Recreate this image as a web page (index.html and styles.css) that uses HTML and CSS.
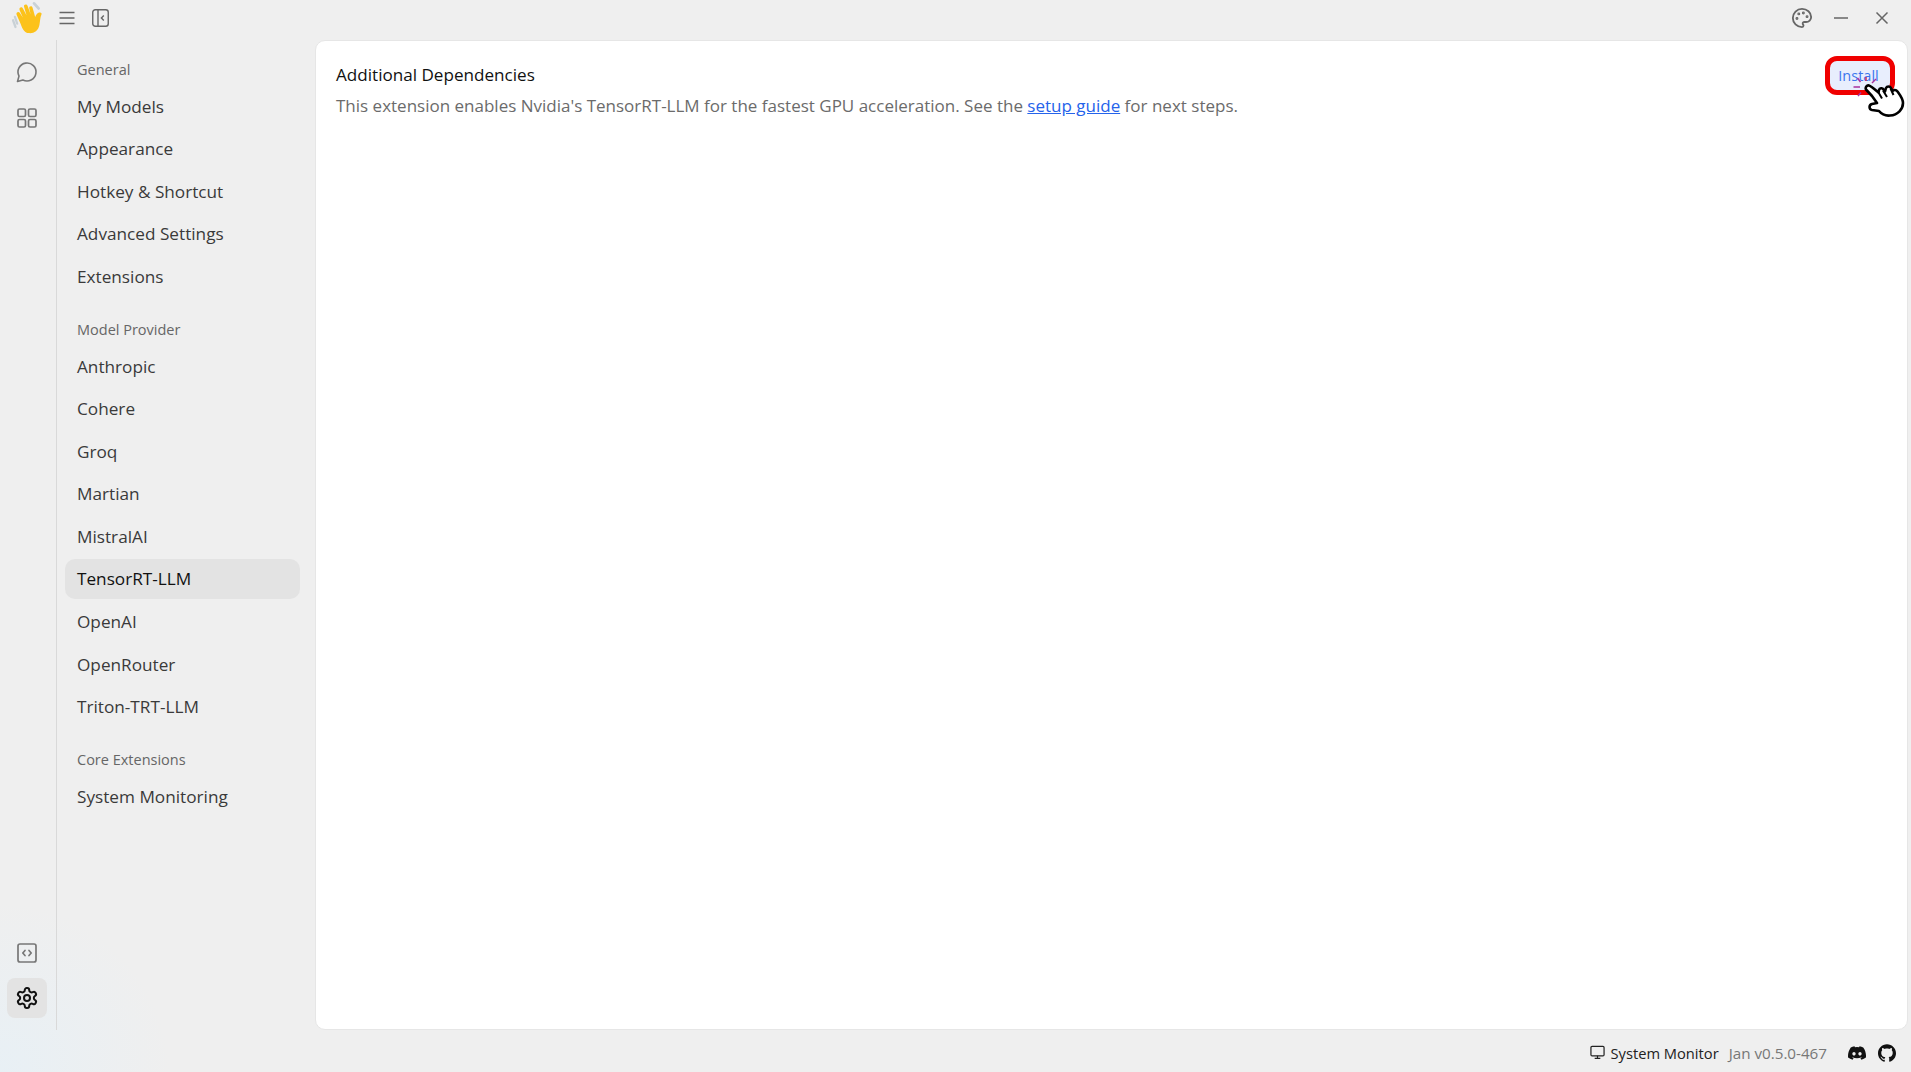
FILE: index.html
```html
<!DOCTYPE html>
<html lang="en">

<head>
    <meta charset="utf-8">
    <title>Jan</title>
    <link rel="stylesheet" href="styles.css">
</head>

<body>
    <header class="topbar">
        <div class="topbar-left">
            <svg class="logo" viewBox="0 0 32 32" width="36" height="36">
                <path d="M3.500 15 L5.500 21 M1.800 18 L4 24" stroke="#c9d1d6" stroke-width="2" fill="none" stroke-linecap="round" />
                <path d="M20.500 3 L24.500 7.500" stroke="#c9d1d6" stroke-width="2.500" fill="none" stroke-linecap="round" />
                <path d="M8.500 21 L5 13 C4.200 11 6.800 9.800 7.900 11.600 L10.500 15.500 L7.600 8.800 C6.900 6.700 9.600 5.600 10.600 7.600 L13.800 13.500 L11.600 6 C11.100 4 13.900 3.200 14.700 5.200 L17.400 12.600 L16.200 7.300 C15.900 5.200 18.600 4.800 19.200 6.800 L21.500 15 C22.400 13 23.400 11.600 25 11.200 C27 10.800 27.600 12 27 13.200 C25.800 15.600 26 19 25.200 22.400 C24.200 27.400 20 30 15.800 29.400 C12.400 29 10.600 26.800 8.500 21 Z" fill="#fcc21b" />
            </svg>
            <svg class="icon" viewBox="0 0 16 16" width="16" height="16">
                <path d="M0.500 2.500h15M0.500 8h15M0.500 13.500h15" stroke="#666" stroke-width="1.500" fill="none" />
            </svg>
            <svg class="icon" viewBox="0 0 17 18" width="17" height="18">
                <rect x="0.750" y="0.750" width="15.500" height="16.500" rx="2.500" stroke="#666" stroke-width="1.400" fill="none" />
                <path d="M6 1v16M11.800 6.500 L9.400 9 L11.800 11.500" stroke="#666" stroke-width="1.400" fill="none" />
            </svg>
        </div>
        <div class="topbar-right">
            <svg class="icon palette" viewBox="0 0 24 24" width="22" height="22" fill="none" stroke="#666" stroke-width="2" stroke-linecap="round" stroke-linejoin="round">
                <circle cx="13.500" cy="6.500" r="0.600" fill="#666" />
                <circle cx="17.500" cy="10.500" r="0.600" fill="#666" />
                <circle cx="8.500" cy="7.500" r="0.600" fill="#666" />
                <circle cx="6.500" cy="12.500" r="0.600" fill="#666" />
                <path d="M12 2C6.500 2 2 6.500 2 12s4.500 10 10 10c.926 0 1.648-.746 1.648-1.688 0-.437-.18-.835-.437-1.125-.29-.289-.438-.652-.438-1.125a1.640 1.640 0 0 1 1.668-1.668h1.996c3.051 0 5.555-2.503 5.555-5.554C21.965 6.012 17.461 2 12 2z" />
            </svg>
            <svg class="icon" viewBox="0 0 14 14" width="14" height="14">
                <path d="M0 7h14" stroke="#666" stroke-width="1.500" />
            </svg>
            <svg class="icon close" viewBox="0 0 14 14" width="14" height="14">
                <path d="M1.500 1.500l11 11M12.500 1.500l-11 11" stroke="#666" stroke-width="1.500" />
            </svg>
        </div>
    </header>

    <div class="body-row">
        <aside class="rail">
            <div class="rail-group">
                <div class="rail-btn">
                    <svg viewBox="0 0 24 24" width="24" height="24" fill="none" stroke="#777" stroke-width="1.600" stroke-linecap="round" stroke-linejoin="round">
                        <path d="M7.900 20A9 9 0 1 0 4 16.100L2.500 21.500Z" />
                    </svg>
                </div>
                <div class="rail-btn">
                    <svg viewBox="0 0 20 20" width="20" height="20" fill="none" stroke="#777" stroke-width="1.700">
                        <rect x="1" y="1" width="7.500" height="7.500" rx="1.500" />
                        <rect x="11.500" y="1" width="7.500" height="7.500" rx="1.500" />
                        <rect x="1" y="11.500" width="7.500" height="7.500" rx="1.500" />
                        <rect x="11.500" y="11.500" width="7.500" height="7.500" rx="1.500" />
                    </svg>
                </div>
            </div>
            <div class="rail-group">
                <div class="rail-btn">
                    <svg viewBox="0 0 20 20" width="20" height="20" fill="none" stroke="#777" stroke-width="1.700" stroke-linecap="round" stroke-linejoin="round">
                        <rect x="1" y="1" width="18" height="18" rx="2" />
                        <path d="M8 7.500L5.800 10L8 12.500M12 7.500L14.200 10L12 12.500" />
                    </svg>
                </div>
                <div class="rail-btn active">
                    <svg viewBox="0 0 24 24" width="24" height="24" fill="none" stroke="#111" stroke-width="2" stroke-linecap="round" stroke-linejoin="round">
                        <path d="M12.220 2h-.44a2 2 0 0 0-2 2v.18a2 2 0 0 1-1 1.730l-.43.25a2 2 0 0 1-2 0l-.15-.08a2 2 0 0 0-2.730.73l-.22.38a2 2 0 0 0 .73 2.730l.15.1a2 2 0 0 1 1 1.720v.51a2 2 0 0 1-1 1.740l-.15.09a2 2 0 0 0-.73 2.730l.22.38a2 2 0 0 0 2.730.73l.15-.08a2 2 0 0 1 2 0l.43.25a2 2 0 0 1 1 1.730V20a2 2 0 0 0 2 2h.44a2 2 0 0 0 2-2v-.18a2 2 0 0 1 1-1.730l.43-.25a2 2 0 0 1 2 0l.15.08a2 2 0 0 0 2.730-.73l.22-.39a2 2 0 0 0-.73-2.730l-.15-.08a2 2 0 0 1-1-1.740v-.5a2 2 0 0 1 1-1.740l.15-.09a2 2 0 0 0 .73-2.730l-.22-.38a2 2 0 0 0-2.730-.73l-.15.08a2 2 0 0 1-2 0l-.43-.25a2 2 0 0 1-1-1.730V4a2 2 0 0 0-2-2z" />
                        <circle cx="12" cy="12" r="3" />
                    </svg>
                </div>
            </div>
        </aside>

        <nav class="sidebar">
            <h3 class="group-title">General</h3>
            <a class="item">My Models</a>
            <a class="item">Appearance</a>
            <a class="item">Hotkey &amp; Shortcut</a>
            <a class="item">Advanced Settings</a>
            <a class="item">Extensions</a>

            <h3 class="group-title">Model Provider</h3>
            <a class="item">Anthropic</a>
            <a class="item">Cohere</a>
            <a class="item">Groq</a>
            <a class="item">Martian</a>
            <a class="item">MistralAI</a>
            <a class="item selected">TensorRT-LLM</a>
            <a class="item">OpenAI</a>
            <a class="item">OpenRouter</a>
            <a class="item">Triton-TRT-LLM</a>

            <h3 class="group-title">Core Extensions</h3>
            <a class="item">System Monitoring</a>
        </nav>

        <main class="card">
            <div class="dep-row">
                <div>
                    <h2 class="dep-title">Additional Dependencies</h2>
                    <p class="dep-text">This extension enables Nvidia's TensorRT-LLM for the fastest GPU acceleration. See the <a class="link" href="#">setup guide</a> for next steps.</p>
                </div>
                <div class="install-wrap">
                    <button class="install">Install</button>
                    <svg class="hand" viewBox="0 0 55 42" width="55" height="42">
                        <g stroke="#a8329f" stroke-width="1.500" fill="none">
                            <path d="M3.500 12h6.500M8 21l3-3.500M7.500 3l3 4" />
                            <path d="M16 2v4" stroke="#d02a5a" />
                            <path d="M22 8l4-4" />
                        </g>
                        <g transform="translate(15 8)">
                            <path d="M12 20 L7 13 L1 6.500 C0 4.500 1.800 2 4 2.500 C6 3 10 6.500 13.500 9.500 L14 7 C14.500 5 17.500 4.500 18.500 6.500 L20 8.500 L21 5 C22 3 25 3 26 5 L27.500 8 C28.500 6.500 31 6.500 32.500 8.500 C35 12 38 15.500 38 20 C38 26 33 32 25 32.500 C20.500 33 16.500 31 14 28 L7 27 C4 26.500 3.500 22 7 21 Z" fill="#fff" stroke="#000" stroke-width="2.600" stroke-linejoin="round" />
                            <path d="M18 7.500 L22 14M25.500 5.500 L28.500 12M13.500 9.500 L17 15.500" stroke="#000" stroke-width="2" fill="none" />
                        </g>
                    </svg>
                </div>
            </div>
        </main>
    </div>

    <footer class="statusbar">
        <svg viewBox="0 0 16 16" width="15" height="15" fill="none" stroke="#222" stroke-width="1.300">
            <rect x="1" y="1.500" width="14" height="10" rx="1.200" />
            <path d="M8 11.500v2.500M5 14.300h6" />
        </svg>
        <span class="monitor">System Monitor</span>
        <span class="version">Jan v0.5.0-467</span>
        <svg class="discord" viewBox="0 0 24 18" width="18" height="14">
            <path fill="#111" d="M20.300 1.500A19.800 19.800 0 0 0 15.400 0l-.6 1.300a18.400 18.400 0 0 0-5.500 0L8.600 0a19.700 19.700 0 0 0-4.900 1.500C.6 6.100-.3 10.600.1 15a19.900 19.900 0 0 0 6 3l1.300-2a13 13 0 0 1-2-.9l.5-.4a14.200 14.200 0 0 0 12.200 0l.5.4a13 13 0 0 1-2 .9l1.300 2a19.800 19.800 0 0 0 6-3c.5-5.100-.8-9.600-3.600-13.500zM8 12.300c-1.200 0-2.200-1.100-2.200-2.400S6.800 7.500 8 7.500s2.200 1.100 2.200 2.400-1 2.400-2.200 2.400zm8 0c-1.200 0-2.200-1.100-2.200-2.400s1-2.400 2.200-2.400 2.200 1.100 2.200 2.400-1 2.400-2.200 2.400z" />
        </svg>
        <svg class="github" viewBox="0 0 24 24" width="18" height="18">
            <path fill="#111" d="M12 .297c-6.630 0-12 5.373-12 12 0 5.303 3.438 9.800 8.205 11.385.6.113.82-.258.82-.577 0-.285-.01-1.040-.015-2.040-3.338.724-4.042-1.610-4.042-1.610C4.422 18.070 3.633 17.700 3.633 17.700c-1.087-.744.084-.729.084-.729 1.205.084 1.838 1.236 1.838 1.236 1.070 1.835 2.809 1.305 3.495.998.108-.776.417-1.305.76-1.605-2.665-.3-5.466-1.332-5.466-5.930 0-1.310.465-2.380 1.235-3.220-.135-.303-.54-1.523.105-3.176 0 0 1.005-.322 3.300 1.230.96-.267 1.980-.399 3-.405 1.020.006 2.040.138 3 .405 2.280-1.552 3.285-1.230 3.285-1.230.645 1.653.24 2.873.12 3.176.765.840 1.230 1.910 1.230 3.220 0 4.610-2.805 5.625-5.475 5.920.42.36.81 1.096.81 2.220 0 1.606-.015 2.896-.015 3.286 0 .315.21.69.825.57C20.565 22.092 24 17.592 24 12.297c0-6.627-5.373-12-12-12" />
        </svg>
    </footer>
</body></html>
```

FILE: styles.css
```css
* {
    box-sizing: border-box;
}

html,
body {
    height: 100%;
}

body {
    margin: 0;
    display: flex;
    flex-direction: column;
    overflow: hidden;
    font-family: "Open Sans", "Noto Sans", sans-serif;
    background-color: #efefef;
    background-image: radial-gradient(circle at 0 100%, #e8f0f5, rgba(232, 240, 245, 0) 170px);
    color: #333;
}

.topbar {
    height: 40px;
    flex: none;
    display: flex;
    justify-content: space-between;
    align-items: center;
    padding: 0 22px 4px 11px;
}

.topbar-left,
.topbar-right {
    display: flex;
    align-items: center;
}

.topbar-left {
    gap: 17px;
}

.topbar-right {
    gap: 19px;
}

.logo {
    margin-right: -5px;
}

.palette {
    margin-right: 2px;
}

.close {
    margin-left: 8px;
}

.body-row {
    flex: 1;
    min-height: 0;
    display: flex;
}

.rail {
    width: 57px;
    flex: none;
    display: flex;
    flex-direction: column;
    justify-content: space-between;
    padding: 12px 6px 12px 7px;
    border-right: 1px solid #d9d9d9;
}

.rail-group {
    display: flex;
    flex-direction: column;
    gap: 5.5px;
}

.rail-btn {
    width: 40px;
    height: 40px;
    padding-right: 1px;
    display: flex;
    align-items: center;
    justify-content: center;
    border-radius: 8px;
}

.rail-btn.active {
    background-color: #e3e3e3;
}

.sidebar {
    width: 258px;
    flex: none;
    padding: 17.5px 15px 0 8px;
}

.group-title {
    margin: 0 0 5.1px;
    padding-left: 12px;
    height: 24px;
    line-height: 24px;
    font-size: 14.5px;
    font-weight: 400;
    color: #666;
}

.item {
    display: block;
    height: 40px;
    line-height: 40px;
    margin-bottom: 2.55px;
    padding-left: 12px;
    border-radius: 10px;
    font-size: 17.2px;
    color: #3a3a3a;
}

.item+.group-title {
    margin-top: 20.8px;
}

.item.selected {
    background-color: #e3e3e3;
    color: #111;
}

.card {
    flex: 1;
    background-color: #fff;
    border: 1px solid #e6e6e6;
    border-radius: 10px;
    margin-right: 3px;
    padding: 21.5px 12px 0 20px;
}

.dep-row {
    display: flex;
    justify-content: space-between;
    align-items: flex-start;
}

.dep-title {
    margin: 0;
    font-size: 17.1px;
    line-height: 24px;
    font-weight: 400;
    color: #111;
}

.dep-text {
    margin: 7px 0 0;
    font-size: 17px;
    line-height: 24px;
    color: #6b6b6b;
}

.link {
    color: #2563eb;
    text-decoration: underline;
}

.install-wrap {
    position: relative;
    margin-top: -6.5px;
}

.install {
    display: block;
    width: 70px;
    height: 39px;
    padding: 0 3px 0 0;
    border: 5px solid #f00000;
    border-radius: 12px;
    background-color: #e8eefd;
    color: #3b76ee;
    font-family: inherit;
    font-size: 14.5px;
}

/* hand + click marks sit over the button */
.hand {
    position: absolute;
    top: 19px;
    left: 25px;
}

.statusbar {
    height: 42px;
    flex: none;
    display: flex;
    justify-content: flex-end;
    align-items: center;
    padding: 3px 15px 0 0;
}

.monitor {
    margin-left: 6px;
    font-size: 14.7px;
    color: #222;
}

.version {
    margin-left: 10px;
    font-size: 15.2px;
    color: #777;
}

.discord {
    margin-left: 21px;
}

.github {
    margin-left: 12px;
}
```
